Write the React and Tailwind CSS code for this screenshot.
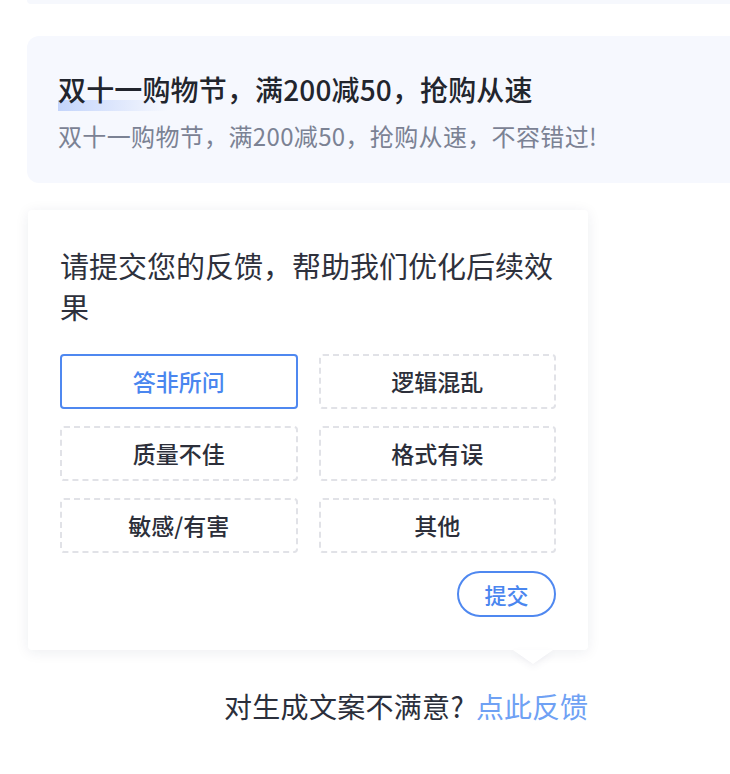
export default function App() {
  const font = { fontFamily: '"PingFang SC","Noto Sans CJK SC","Noto Sans",sans-serif' };
  const opts = ["答非所问", "逻辑混乱", "质量不佳", "格式有误", "敏感/有害", "其他"];
  return (
    <div className="w-[730px] h-[774px] bg-white overflow-hidden" style={font}>
      <div className="ml-[27px] w-[760px] h-[4px] rounded-b-[12px] bg-[#f6f8fd]" />
      <div className="ml-[27px] mt-[32px] w-[760px] rounded-[12px] bg-[#f6f8fe] pl-[31px] pt-[35px] pb-[31px]">
        <div className="relative">
          <div className="absolute left-0 top-[29px] w-[110px] h-[11px] bg-gradient-to-r from-[#c3d4fb] to-[#f6f8fe]/0" />
          <div className="relative text-[28px] leading-[36px] font-medium tracking-[0.15px] text-[#22252d]">
            双十一购物节，满200减50，抢购从速
          </div>
        </div>
        <div className="mt-[13px] text-[24px] leading-[32px] tracking-[0.35px] text-[#7b8294]">
          双十一购物节，满200减50，抢购从速，不容错过!
        </div>
      </div>
      <div className="ml-[28px] mt-[27px] w-[560px]">
        <div className="relative rounded-[4px] bg-white shadow-[0_2px_14px_rgba(30,40,80,0.08)] px-[32px] pt-[35px] pb-[33px]">
          <div className="text-[29px] leading-[41px] text-[#2e313c]">
            请提交您的反馈，帮助我们优化后续效果
          </div>
          <div className="mt-[27px] grid grid-cols-2 gap-x-[21px] gap-y-[17px]">
            {opts.map((o, i) =>
              i === 0 ? (
                <div key={o} className="h-[55px] rounded-[4px] border-2 border-[#4f88f0] flex items-center justify-center text-[23px] font-medium text-[#4a86ef]">
                  {o}
                </div>
              ) : (
                <div key={o} className="h-[55px] rounded-[4px] border-2 border-dashed border-[#e1e2e7] flex items-center justify-center text-[23px] font-medium text-[#2c2f3a]">
                  {o}
                </div>
              )
            )}
          </div>
          <div className="mt-[18px] flex justify-end">
            <div className="w-[99px] h-[46px] rounded-full border-2 border-[#4f88f0] flex items-center justify-center text-[22px] font-medium text-[#4a86ef]">
              提交
            </div>
          </div>
          <div className="absolute left-[485px] -bottom-[14px] w-0 h-0 border-l-[20px] border-r-[20px] border-t-[14px] border-l-transparent border-r-transparent border-t-white drop-shadow-[0_3px_3px_rgba(30,40,80,0.06)]" />
        </div>
        <div className="mt-[36px] flex justify-end items-center text-[28px] leading-[40px]">
          <span className="text-[#2b2f3b] tracking-[0.3px]">对生成文案不满意?</span>
          <span className="ml-[12px] text-[#6fa1f4]">点此反馈</span>
        </div>
      </div>
    </div>
  );
}
